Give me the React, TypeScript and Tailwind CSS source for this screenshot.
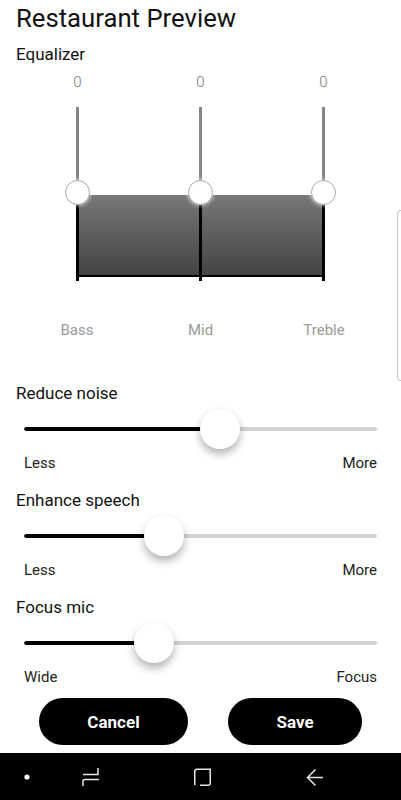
const font = { fontFamily: "Roboto, sans-serif" };

function EqColumn({ value }: { value: string }) {
  return (
    <div className="relative w-[3px] h-[174px] flex flex-col">
      <div className="h-[88px] bg-[#858585] w-[3px]" />
      <div className="flex-1 bg-black w-[3px]" />
      <div className="absolute left-[-11px] top-[73px] w-[25px] h-[25px] rounded-full bg-white border border-[#a8a8a8] shadow-[0_0_4px_rgba(255,255,255,0.9)]" />
      <div className="absolute top-[-35px] left-[-18px] w-[39px] text-center text-[15px] leading-[20px] font-light text-[#777]">{value}</div>
    </div>
  );
}

function Slider({ title, left, right, fill }: { title: string; left: string; right: string; fill: number }) {
  return (
    <div className="h-[107px]">
      <div className="pl-4 text-[17px] leading-[24px] text-[#111]">{title}</div>
      <div className="relative mx-6 mt-[4px] h-[40px] flex items-center">
        <div className="w-full h-[4px] rounded-full bg-[#d2d2d2] overflow-hidden">
          <div className="h-full bg-black rounded-full" style={{ width: fill }} />
        </div>
        <div
          className="absolute top-0 w-[40px] h-[40px] rounded-full bg-white shadow-[0_5px_8px_rgba(0,0,0,0.3)]"
          style={{ left: fill - 4 }}
        />
      </div>
      <div className="flex justify-between mx-6 mt-[4px] text-[15px] leading-[20px] text-[#222]">
        <span>{left}</span>
        <span>{right}</span>
      </div>
    </div>
  );
}

export default function App() {
  return (
    <div className="relative w-[401px] h-[800px] bg-white overflow-hidden flex flex-col" style={font}>
      <div className="pl-4 pt-[2px] text-[25.7px] leading-[32px] text-[#111] h-[42px]">Restaurant Preview</div>
      <div className="pl-4 text-[17px] leading-[24px] text-[#111]">Equalizer</div>

      <div className="relative mx-[76px] mt-[41px] w-[249px] h-[174px] flex justify-between">
        <div className="absolute left-[1px] right-[1px] top-[88px] h-[82px] bg-gradient-to-b from-[#787878] to-[#444444] border-b-2 border-black" />
        <EqColumn value="0" />
        <EqColumn value="0" />
        <EqColumn value="0" />
      </div>

      <div className="mt-[39px] h-[20px] mx-[37px] flex justify-between w-[327px] text-[15px] leading-[20px] text-[#9a9a9a] text-center">
        <span className="w-[80px]">Bass</span>
        <span className="w-[80px]">Mid</span>
        <span className="w-[80px]">Treble</span>
      </div>

      <div className="mt-[41px]">
        <Slider title="Reduce noise" left="Less" right="More" fill={180} />
        <Slider title="Enhance speech" left="Less" right="More" fill={124} />
        <Slider title="Focus mic" left="Wide" right="Focus" fill={114} />
      </div>

      <div className="absolute left-[39px] top-[698px] w-[149px] h-[47px] pt-[2px] rounded-full bg-black text-white font-bold text-[17px] flex items-center justify-center">Cancel</div>
      <div className="absolute left-[228px] top-[698px] w-[134px] h-[47px] pt-[2px] rounded-full bg-black text-white font-bold text-[17px] flex items-center justify-center">Save</div>

      <div className="absolute right-0 top-[210px] w-[4px] h-[171px] border-l border-y border-[#c8c8c8] rounded-l-[4px]" />

      <div className="absolute left-0 right-0 bottom-0 h-[47px] bg-black">
        <svg width="401" height="47" viewBox="0 0 401 47" fill="none" stroke="#e8e8e8" strokeWidth="1.5">
          <circle cx="27" cy="24" r="2.6" fill="#fff" stroke="none" />
          <path d="M98 15V21.5H83" />
          <path d="M99 26.5H85C83.8 26.5 83 27.3 83 28.5V33" />
          <path d="M194.75 32V18.5C194.75 17 195.8 16.25 197 16.25H210.25V30C210.25 31.4 209.4 32.25 208 32.25H200" />
          <path d="M323 24.5H308M315.5 16.5L307.5 24.5L315.5 32.5" />
        </svg>
      </div>
    </div>
  );
}
